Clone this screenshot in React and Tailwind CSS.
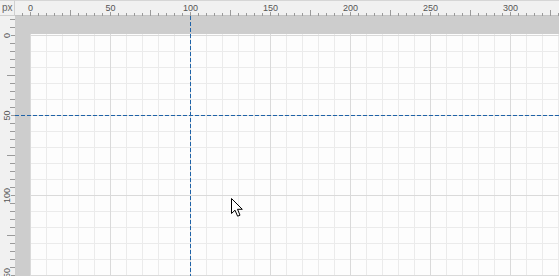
import React from 'react'

const TICK = '#9a9a9a'
const LABEL = '#555555'
const GUIDE = '#1f63a8'

// top ruler: 0 sits at x=15 inside the ruler (page x=30), 8px = 5 units
function TopRuler() {
  const ticks = []
  for (let k = -1; k <= 66; k++) {
    const x = 15 + 8 * k + 0.5
    if (k % 10 === 0) {
      ticks.push(<line key={k} x1={x} x2={x} y1={12} y2={16} stroke={TICK} />)
      ticks.push(
        <text key={'t' + k} x={x} y={11} textAnchor="middle" fontSize="9" fill={LABEL}>
          {k * 5}
        </text>
      )
    } else if (k % 5 === 0) {
      ticks.push(<line key={k} x1={x} x2={x} y1={10} y2={16} stroke={TICK} />)
    } else {
      ticks.push(<line key={k} x1={x} x2={x} y1={13} y2={16} stroke={TICK} />)
    }
  }
  return (
    <svg width="544" height="16" className="block" style={{ fontFamily: '"Liberation Sans", Arial, sans-serif' }}>
      <line x1="0" x2="544" y1="0.5" y2="0.5" stroke="#d6d6d6" />
      <line x1="0" x2="544" y1="15.5" y2="15.5" stroke="#c4c4c4" />
      {ticks}
    </svg>
  )
}

// left ruler: 0 at local y=19 (page y=35)
function LeftRuler() {
  const ticks = []
  for (let k = -2; k <= 30; k++) {
    const y = 19 + 8 * k + 0.5
    if (k % 10 === 0) {
      ticks.push(<line key={k} y1={y} y2={y} x1={11} x2={15} stroke={TICK} />)
      ticks.push(
        <text
          key={'t' + k}
          x={0}
          y={0}
          transform={`translate(10 ${y}) rotate(-90)`}
          textAnchor="middle"
          fontSize="9"
          fill={LABEL}
        >
          {k * 5}
        </text>
      )
    } else if (k % 5 === 0) {
      ticks.push(<line key={k} y1={y} y2={y} x1={7} x2={15} stroke={TICK} />)
    } else {
      ticks.push(<line key={k} y1={y} y2={y} x1={10} x2={15} stroke={TICK} />)
    }
  }
  return (
    <svg width="15" height="260" className="block" style={{ fontFamily: '"Liberation Sans", Arial, sans-serif' }}>
      {ticks}
    </svg>
  )
}

function GridCanvas() {
  return (
    <svg width="529" height="242" className="block">
      <defs>
        <pattern id="minor" width="16" height="16" x="0" y="1" patternUnits="userSpaceOnUse">
          <rect x="0" y="0" width="16" height="1" fill="#ebebeb" />
          <rect x="0" y="0" width="1" height="16" fill="#ebebeb" />
        </pattern>
        <pattern id="major" width="80" height="80" x="0" y="1" patternUnits="userSpaceOnUse">
          <rect x="0" y="0" width="80" height="1" fill="#dadada" />
          <rect x="0" y="0" width="1" height="80" fill="#dadada" />
        </pattern>
      </defs>
      <rect width="529" height="242" fill="#fdfdfd" />
      <rect width="529" height="242" fill="url(#minor)" />
      <rect width="529" height="242" fill="url(#major)" />
    </svg>
  )
}

function Cursor() {
  return (
    <svg width="14" height="20" viewBox="0 0 14 20">
      <path
        d="M0.5 0.5 L0.5 15.5 L4 12.2 L6.6 18.2 L9 17.2 L6.5 11.3 L11.3 11.3 Z"
        fill="#ffffff"
        stroke="#000000"
        strokeWidth="1"
        strokeLinejoin="miter"
      />
    </svg>
  )
}

export default function App() {
  return (
    <div className="w-[559px] h-[276px] overflow-hidden grid grid-cols-[15px_544px] grid-rows-[16px_260px] bg-[#f1f1f1] font-['Liberation_Sans',Arial,sans-serif]">
      {/* corner */}
      <div className="border-t border-r border-b border-[#d0d0d0] border-t-[#d6d6d6] pl-[2px] pt-[1px] text-[10px] leading-[12px] text-[#666]">
        px
      </div>

      <TopRuler />
      <LeftRuler />

      {/* work area */}
      <div className="relative bg-[#cdcdcd] pt-[18px] pl-[15px] overflow-hidden">
        <GridCanvas />

        {/* guides */}
        <svg className="absolute left-0 top-[99px]" width="544" height="1">
          <line x1="0" x2="544" y1="0.5" y2="0.5" stroke={GUIDE} strokeDasharray="4 2" />
        </svg>
        <svg className="absolute top-0 left-[175px]" width="1" height="260">
          <line y1="0" y2="260" x1="0.5" x2="0.5" stroke={GUIDE} strokeDasharray="4 2" />
        </svg>

        <div className="absolute left-[216px] top-[182px]">
          <Cursor />
        </div>
      </div>
    </div>
  )
}
